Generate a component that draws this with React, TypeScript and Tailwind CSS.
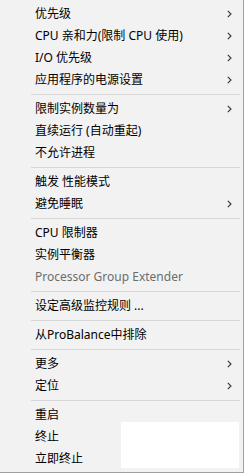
import type { ReactNode } from "react";

type Item = { label: string; sub?: boolean; disabled?: boolean } | "sep";

const items: Item[] = [
  { label: "优先级", sub: true },
  { label: "CPU 亲和力(限制 CPU 使用)", sub: true },
  { label: "I/O 优先级", sub: true },
  { label: "应用程序的电源设置", sub: true },
  "sep",
  { label: "限制实例数量为", sub: true },
  { label: "直续运行 (自动重起)" },
  { label: "不允许进程" },
  "sep",
  { label: "触发 性能模式" },
  { label: "避免睡眠", sub: true },
  "sep",
  { label: "CPU 限制器" },
  { label: "实例平衡器" },
  { label: "Processor Group Extender", disabled: true },
  "sep",
  { label: "设定高级监控规则 ..." },
  "sep",
  { label: "从ProBalance中排除" },
  "sep",
  { label: "更多", sub: true },
  { label: "定位", sub: true },
  "sep",
  { label: "重启" },
  { label: "终止" },
  { label: "立即终止" },
];

function Chevron() {
  return (
    <svg width="5" height="8" viewBox="0 0 5 8" className="shrink-0">
      <path d="M0.8 0.8 L4 4 L0.8 7.2" fill="none" stroke="#333" strokeWidth="1.1" />
    </svg>
  );
}

function Row({ children, sub, disabled }: { children: ReactNode; sub?: boolean; disabled?: boolean }) {
  return (
    <div
      className={`flex h-[22px] items-center justify-between pl-[35px] pr-[11px] ${
        disabled ? "text-[#6d6d6d]" : "text-black"
      }`}
    >
      <span className="whitespace-nowrap">{children}</span>
      {sub && <Chevron />}
    </div>
  );
}

export default function App() {
  return (
    <div
      className="relative h-[473px] w-[244px] border-r border-b border-[#a0a0a0] bg-[#f2f2f2] pt-[3px] text-[12px] leading-none"
      style={{ fontFamily: '"Segoe UI", "Noto Sans", "Noto Sans CJK SC", sans-serif' }}
    >
      {items.map((it, i) =>
        it === "sep" ? (
          <div key={i} className="py-[3px] pl-[31px] pr-[3px]">
            <div className="h-px bg-[#d7d7d7]" />
          </div>
        ) : (
          <Row key={i} sub={it.sub} disabled={it.disabled}>
            {it.label}
          </Row>
        )
      )}
      <div className="absolute left-[121px] top-[422px] h-[46px] w-[118px] bg-white" />
    </div>
  );
}
